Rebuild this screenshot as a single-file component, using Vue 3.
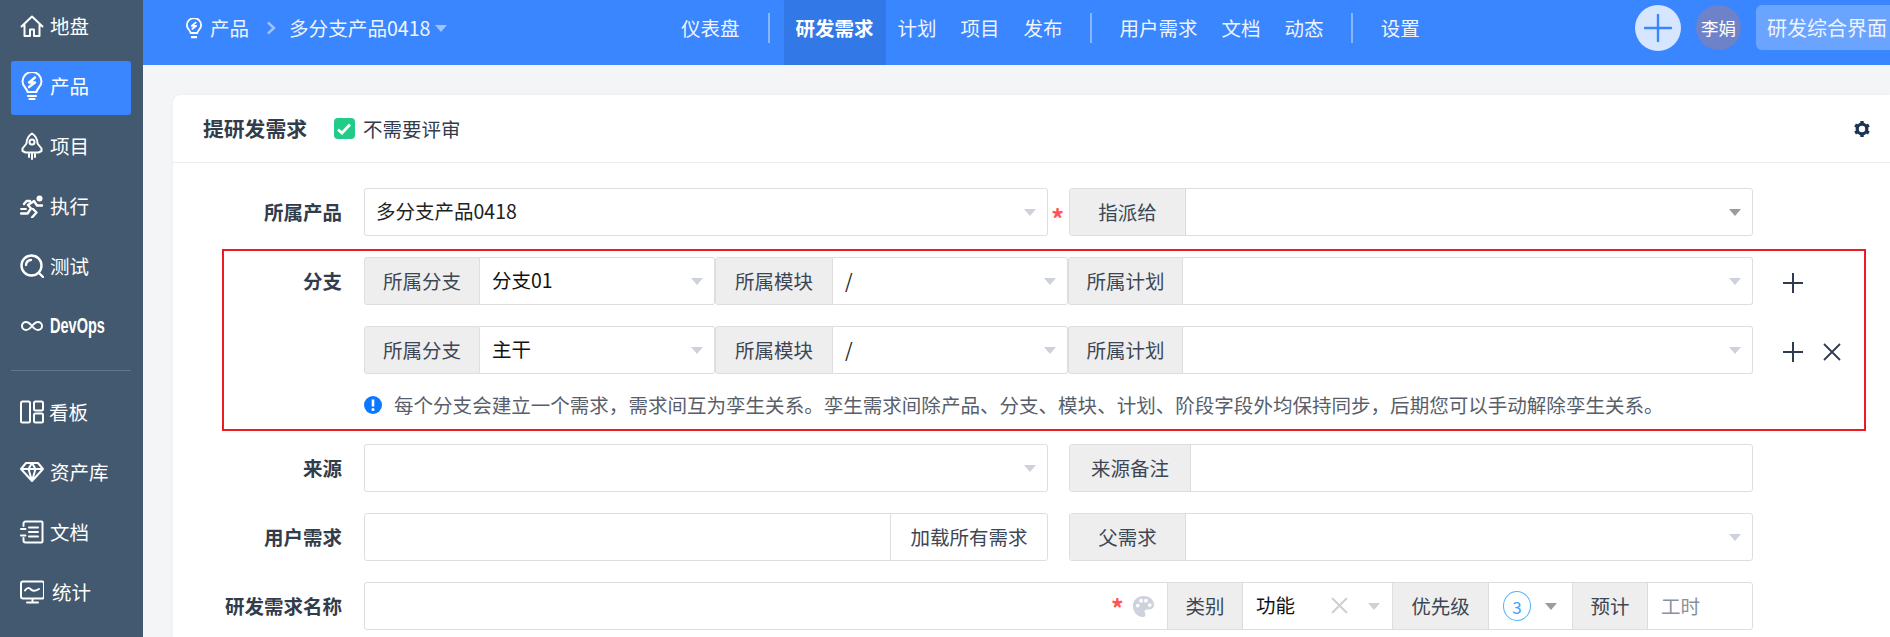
<script setup>
const items = [
  { key: 'home', label: '地盘', view: '0 0 24 24', h: 24 },
  { key: 'product', label: '产品', active: true, view: '0 0 24 28', h: 28 },
  { key: 'project', label: '项目', view: '0 0 24 28', h: 28 },
  { key: 'run', label: '执行', view: '0 0 24 24', h: 24 },
  { key: 'test', label: '测试', view: '0 0 24 24', h: 24 },
  { key: 'devops', label: 'DevOps', narrow: true, view: '0 0 24 24', h: 24 }
]
const items2 = [
  { key: 'board', label: '看板' },
  { key: 'asset', label: '资产库' },
  { key: 'doc', label: '文档' },
  { key: 'stat', label: '统计' }
]
const branches = [
  { name: '分支01', remove: false },
  { name: '主干', remove: true }
]
</script>

<template>
  <div class="page">
    <aside class="side">
      <div v-for="it in items" :key="it.key" class="side-item" :class="{ on: it.active }">
        <svg class="side-ico" :viewBox="it.view" width="24" :height="it.h" fill="none" stroke="#fff" stroke-width="2" stroke-linejoin="round" stroke-linecap="round">
          <template v-if="it.key === 'home'">
            <path d="M1.500 12.500 12 2.500l10.500 10M4.500 10.500V22h5.500v-6.500h4V22h5.500V10.500" />
          </template>
          <template v-else-if="it.key === 'product'">
            <path d="M7.500 20c0-3.500-5-5-5-10.500a9.500 9.500 0 0 1 19 0c0 5.500-5 7-5 10.500z" />
            <path d="M8 24h8M9.500 27h5" stroke-width="2.200" />
            <path d="M15 5.500 9 10.500h6L9 15" stroke-width="2.400" />
          </template>
          <template v-else-if="it.key === 'project'">
            <path d="M12 1.500c4.500 3 5.500 7 5.500 10l4 5v2.500l-3 1.500H5.500l-3-1.500v-2.500l4-5c0-3 1-7 5.500-10z" />
            <circle cx="12" cy="10" r="2.500" />
            <path d="M9 22v3M12 22v5M15 22v3" />
          </template>
          <template v-else-if="it.key === 'run'">
            <circle cx="19.500" cy="4.500" r="3" fill="#fff" stroke="none" />
            <path d="M1 19.500h6.500l3.500-5-3-3.500 6-4 3 4.500h5M10 7H6.500L4 10M13 15l3.500 3.500-4.500 5" stroke-width="2.400" />
            <path d="M1 15h5" stroke-width="1.800" />
          </template>
          <template v-else-if="it.key === 'test'">
            <circle cx="11.500" cy="11.500" r="10" stroke-width="2.400" />
            <path d="M6 11a5.500 5.500 0 0 1 5-5M19 19l4 4" stroke-width="2.400" />
          </template>
          <template v-else-if="it.key === 'devops'">
            <path d="M12 12c-2-2.500-3.500-4-6-4a4 4 0 0 0 0 8c2.500 0 4-1.500 6-4s3.500-4 6-4a4 4 0 0 1 0 8c-2.500 0-4-1.500-6-4z" />
          </template>
        </svg>
        <span :class="{ narrow: it.narrow }">{{ it.label }}</span>
      </div>
      <div class="side-line"></div>
      <div v-for="it in items2" :key="it.key" class="side-item" :class="it.key">
        <svg class="side-ico" viewBox="0 0 24 24" width="24" height="24" fill="none" stroke="#fff" stroke-width="2" stroke-linejoin="round" stroke-linecap="round">
          <template v-if="it.key === 'board'">
            <rect x="1" y="1.500" width="9" height="21" rx="1.500" />
            <rect x="14" y="1.500" width="9" height="9" rx="1.500" />
            <rect x="14" y="13.500" width="9" height="9" rx="1.500" />
          </template>
          <template v-else-if="it.key === 'asset'">
            <path d="M6 3h12l5 6-11 12L1 9zM1 9h22M8.500 9 12 21l3.500-12L12 3 8.500 9z" />
          </template>
          <template v-else-if="it.key === 'doc'">
            <path d="M3.500 6V3.500a2 2 0 0 1 2-2h16a1 1 0 0 1 1 1v19a1 1 0 0 1-1 1h-16a2 2 0 0 1-2-2V18" />
            <path d="M1 9h4.500M1 15.500h4.500M9 7.500h9M9 12h9M9 16.500h9" />
          </template>
          <template v-else>
            <rect x="1" y="1.500" width="23" height="17" rx="2" />
            <path d="M5 10.500c2-3 4-3 6-1s4 2 8-.5M7 22.500h11M12.500 19v3" />
          </template>
        </svg>
        <span>{{ it.label }}</span>
      </div>
    </aside>

    <div class="main">
      <header class="top">
        <div class="crumb">
          <svg class="crumb-ico" viewBox="0 0 24 28" width="18" height="21" fill="none" stroke="#fff" stroke-width="2.400" stroke-linejoin="round">
            <path d="M7.500 20c0-3.500-5-5-5-10.500a9.500 9.500 0 0 1 19 0c0 5.500-5 7-5 10.500z" />
            <path d="M8 25.500h8" stroke-width="3" />
            <path d="M15 5.500 9 10.500h6L9 15" />
          </svg>
          <span>产品</span>
          <svg class="crumb-arrow" viewBox="0 0 10 14" fill="none" stroke="#9fc3ff" stroke-width="2.400"><path d="m2 1.500 6 5.500-6 5.500" /></svg>
          <span class="crumb-name">多分支产品0418</span>
          <i class="crumb-caret"></i>
        </div>
        <nav class="nav">
          <span class="nav-item first">仪表盘</span>
          <i class="nav-sep short"></i>
          <span class="nav-item on">研发需求</span>
          <span class="nav-item">计划</span>
          <span class="nav-item">项目</span>
          <span class="nav-item">发布</span>
          <i class="nav-sep"></i>
          <span class="nav-item">用户需求</span>
          <span class="nav-item">文档</span>
          <span class="nav-item">动态</span>
          <i class="nav-sep"></i>
          <span class="nav-item">设置</span>
        </nav>
        <div class="tools">
          <div class="plus-btn">
            <svg viewBox="0 0 30 30" width="30" height="30" fill="none" stroke="#3a86ff" stroke-width="2.400" stroke-linecap="round"><path d="M15 2v26M2 15h26" /></svg>
          </div>
          <div class="avatar">李娟</div>
          <div class="space">研发综合界面</div>
        </div>
      </header>

      <section class="card">
        <div class="card-head">
          <h1>提研发需求</h1>
          <span class="check">
            <svg viewBox="0 0 16 16" width="16" height="16" fill="none" stroke="#fff" stroke-width="2.800"><path d="m2 8.500 4 3.500 8-8.500" /></svg>
          </span>
          <span class="check-text">不需要评审</span>
          <svg class="gear" viewBox="0 0 16 16" width="16" height="16" fill="none" stroke="#1f3352">
            <circle cx="8" cy="8" r="4.800" stroke-width="3.200" />
            <path d="M8 0v3M8 13v3M1.100 4l2.600 1.500M12.300 10.500l2.600 1.500M1.100 12l2.600-1.500M12.300 5.500 14.900 4" stroke-width="3.400" />
          </svg>
        </div>

        <div class="form">
          <div class="row">
            <label class="label">所属产品</label>
            <div class="half box sel">
              <span class="val">多分支产品0418</span>
              <i class="caret"></i>
            </div>
            <span class="star mid">*</span>
            <div class="half group">
              <span class="addon w116">指派给</span>
              <div class="fill sel"><i class="caret dark"></i></div>
            </div>
          </div>

          <div class="branch">
            <div v-for="b in branches" :key="b.name" class="row branch-row">
              <label class="label branch-label">{{ b.remove ? '' : '分支' }}</label>
              <div class="branch-group">
                <span class="addon w116 alone">所属分支</span>
                <div class="sel piece w235"><span class="val tight">{{ b.name }}</span><i class="caret"></i></div>
                <span class="addon w118 alone">所属模块</span>
                <div class="sel piece w235"><span class="val slash">/</span><i class="caret"></i></div>
                <span class="addon w115 alone">所属计划</span>
                <div class="sel piece grow"><i class="caret"></i></div>
              </div>
              <div class="ops">
                <svg viewBox="0 0 22 22" width="22" height="22" fill="none" stroke="#2f3c50" stroke-width="2"><path d="M11 1v20M1 11h20" /></svg>
                <svg v-if="b.remove" class="op-x" viewBox="0 0 20 20" width="20" height="20" fill="none" stroke="#2f3c50" stroke-width="1.800"><path d="m2 2 16 16M18 2 2 18" /></svg>
              </div>
            </div>
            <div class="note">
              <svg viewBox="0 0 18 18" width="18" height="18"><circle cx="9" cy="9" r="9" fill="#0b78ff" /><path d="M9 3.500v7" stroke="#fff" stroke-width="2.600" /><circle cx="9" cy="13.500" r="1.500" fill="#fff" /></svg>
              <span>每个分支会建立一个需求，需求间互为孪生关系。孪生需求间除产品、分支、模块、计划、阶段字段外均保持同步，后期您可以手动解除孪生关系。</span>
            </div>
          </div>

          <div class="row">
            <label class="label">来源</label>
            <div class="half box sel"><i class="caret"></i></div>
            <div class="half group gap-l">
              <span class="addon w121">来源备注</span>
              <div class="fill"></div>
            </div>
          </div>

          <div class="row">
            <label class="label">用户需求</label>
            <div class="half group">
              <div class="fill"></div>
              <span class="load">加载所有需求</span>
            </div>
            <div class="half group gap-l">
              <span class="addon w116">父需求</span>
              <div class="fill sel"><i class="caret"></i></div>
            </div>
          </div>

          <div class="row">
            <label class="label">研发需求名称</label>
            <div class="title-group">
              <div class="fill title-input">
                <span class="star small">*</span>
                <svg class="palette" viewBox="0 0 24 24" width="23" height="23">
                  <path fill="#cdd2dc" fill-rule="evenodd" d="M12 1C5.500 1 1 5.500 1 11.500S5.500 23 11 23c2 0 3-1 3-2.500s-1-2-1-3.200c0-1.300 1-2.300 2.500-2.300H18c3 0 5-1.800 5-4.500C23 5 18.500 1 12 1zM6 13a2 2 0 1 1 0-4 2 2 0 0 1 0 4zm3.500-5a2 2 0 1 1 0-4 2 2 0 0 1 0 4zm5 0a2 2 0 1 1 0-4 2 2 0 0 1 0 4zm4 4.500a2 2 0 1 1 0-4 2 2 0 0 1 0 4z" />
                </svg>
              </div>
              <span class="addon w76 lb">类别</span>
              <div class="sel type">
                <span class="val tight">功能</span>
                <svg class="clear" viewBox="0 0 17 17" width="17" height="17" fill="none" stroke="#cfcfcf" stroke-width="2"><path d="m1 1 15 15M16 1 1 16" /></svg>
                <i class="caret"></i>
              </div>
              <span class="addon w97 lb">优先级</span>
              <div class="sel prio">
                <span class="pri">3</span>
                <i class="caret dark"></i>
              </div>
              <span class="addon w76 lb">预计</span>
              <div class="hours">工时</div>
            </div>
          </div>
        </div>
      </section>
    </div>
  </div>
</template>

<style scoped>
.page {
  display: flex;
  width: 1890px;
  height: 637px;
  overflow: hidden;
  background: #f3f5f7;
  font-family: "Noto Sans CJK SC", "Noto Sans", sans-serif;
  font-size: 19.5px;
  color: #333c4a;
  line-height: 1;
}

/* sidebar */
.side {
  flex: 0 0 143px;
  min-width: 0;
  background: #43596f;
  padding: 1px 12px 0 11px;
  box-sizing: border-box;
}
.side-item {
  display: flex;
  align-items: center;
  gap: 6px;
  height: 54px;
  margin-bottom: 6px;
  padding: 0 0 4px 9px;
  box-sizing: border-box;
  color: #fff;
  font-size: 19.5px;
  border-radius: 3px;
}
.side-item.on { background: #3a86ff; }
.side-item.board { gap: 5px; }
.side-item.stat { gap: 8px; }
.side-ico { flex: 0 0 24px; }
.narrow {
  display: inline-block;
  width: 54px;
  font-family: "Liberation Sans", sans-serif;
  font-weight: 700;
  font-size: 22px;
  transform: scaleX(0.66);
  transform-origin: left center;
  white-space: nowrap;
}
.side-line {
  height: 1px;
  background: #64768a;
  margin: 15px 0 16px;
}

/* top bar */
.main { flex: 1; min-width: 0; display: flex; flex-direction: column; }
.top {
  flex: 0 0 65px;
  display: flex;
  align-items: center;
  background: #3a86ff;
  color: #eef4ff;
  padding-left: 42px;
}
.crumb { flex: 0 0 496px; display: flex; align-items: center; font-size: 19.5px; padding-bottom: 9px; box-sizing: border-box; }
.crumb-ico { margin-right: 7px; }
.crumb-arrow { width: 10px; height: 14px; margin: 0 13px 0 17px; }
.crumb-name { font-size: 19.6px; }
.crumb-caret {
  margin-left: 5px;
  border: 6px solid transparent;
  border-top: 7px solid #9fc3ff;
  border-bottom: 0;
}
.nav { display: flex; align-items: center; height: 65px; }
.nav-item {
  display: flex;
  align-items: center;
  height: 65px;
  padding: 0 12px 10px;
  box-sizing: border-box;
  white-space: nowrap;
  font-size: 19.5px;
}
.nav-item.first { padding-left: 0; padding-right: 13px; }
.nav-item.on { background: #3278e6; color: #fff; font-weight: 700; }
.nav-sep {
  flex: 0 0 2px;
  height: 30px;
  margin: 0 16px 9px 15px;
  background: #8ab6ff;
}
.nav-sep.short { margin-right: 14px; }
.tools {
  margin-left: auto;
  display: flex;
  align-items: center;
  gap: 15px;
  flex: 0 0 255px;
  padding-bottom: 10px;
  overflow: hidden;
}
.plus-btn {
  flex: 0 0 46px;
  height: 46px;
  border-radius: 50%;
  background: #d6e6ff;
  display: flex;
  align-items: center;
  justify-content: center;
}
.avatar {
  flex: 0 0 45px;
  height: 45px;
  border-radius: 50%;
  background: #6d82c8;
  color: #fff;
  font-size: 17.5px;
  display: flex;
  align-items: center;
  justify-content: center;
  white-space: nowrap;
}
.space {
  flex: 0 0 160px;
  height: 45px;
  border-radius: 6px 0 0 6px;
  background: #6ba4ff;
  padding-left: 11px;
  display: flex;
  align-items: center;
  white-space: nowrap;
  font-size: 20px;
}

/* card */
.card {
  margin: 30px 0 0 30px;
  flex: 1;
  background: #fff;
  border-radius: 8px 0 0 0;
  box-shadow: 0 0 4px rgba(0, 0, 0, .04);
}
.card-head {
  display: flex;
  align-items: center;
  height: 67px;
  padding-left: 30px;
  border-bottom: 1px solid #ececec;
}
.card-head h1 {
  margin: 0;
  font-size: 20.8px;
  font-weight: 700;
  color: #333c4a;
}
.check {
  margin-left: 27px;
  width: 21px;
  height: 21px;
  border-radius: 4px;
  background: #22cc88;
  display: flex;
  align-items: center;
  justify-content: center;
}
.check-text { margin-left: 8px; font-size: 19.5px; }
.gear { margin-left: auto; margin-right: 20px; }

/* form */
.form { display: flex; flex-direction: column; padding-top: 25px; }
.row { display: flex; align-items: stretch; height: 48px; margin-bottom: 21px; }
.label {
  flex: 0 0 169px;
  display: flex;
  align-items: center;
  justify-content: flex-end;
  margin-right: 22px;
  font-weight: 700;
  color: #333c4a;
}
.half { flex: 0 0 684px; box-sizing: border-box; }
.box, .group, .title-group, .branch-group { border-radius: 3px; }
.box { border: 1.5px solid #dedede; }
.group { display: flex; border: 1.5px solid #dedede; }
.star { color: #f55; font-weight: 700; }
.star.mid {
  flex: 0 0 21px;
  display: flex;
  align-items: center;
  justify-content: center;
  padding: 12px 2px 0 0;
  font-size: 26px;
  box-sizing: border-box;
}
.sel { position: relative; display: flex; align-items: center; }
.val { padding: 0 0 2px 11px; color: #222; font-size: 19.5px; white-space: nowrap; }
.val.tight { padding-left: 12px; color: #111; }
.val.slash { padding-left: 12px; }
.caret {
  position: absolute;
  right: 11px;
  top: 50%;
  margin-top: -3px;
  border: 6px solid transparent;
  border-top: 7px solid #cdd1da;
  border-bottom: 0;
}
.caret.dark { border-top-color: #9a9ca2; }
.fill { flex: 1; min-width: 0; }
.addon {
  display: flex;
  align-items: center;
  justify-content: center;
  background: #eee;
  color: #3d4654;
  border-right: 1px solid #dcdcdc;
  box-sizing: border-box;
  white-space: nowrap;
}
.addon.alone { border: 1.5px solid #dedede; border-radius: 3px 0 0 3px; }
.w116 { flex: 0 0 116px; }
.w115 { flex: 0 0 115px; }
.w118 { flex: 0 0 118px; }
.w121 { flex: 0 0 121px; }
.w76 { flex: 0 0 76px; }
.w97 { flex: 0 0 97px; }
.gap-l { margin-left: 21px; }
.load {
  flex: 0 0 157px;
  box-sizing: border-box;
  display: flex;
  align-items: center;
  justify-content: center;
  border-left: 1px solid #dedede;
  color: #3d4654;
  white-space: nowrap;
}

/* branch block */
.branch {
  margin: -8px 0 13px 49px;
  height: 182px;
  width: 1644px;
  box-sizing: border-box;
  border: 2px solid #ed1c24;
  padding-top: 6px;
}
.branch-label { flex-basis: 118px; }
.branch-group { display: flex; flex: 0 0 1389px; }
.piece { box-sizing: border-box; border: 1.5px solid #dedede; border-left: 0; border-radius: 0 3px 3px 0; }
.w235 { flex: 0 0 235px; }
.grow { flex: 1; }
.ops { position: relative; margin-left: 29px; display: flex; align-items: center; padding-top: 3px; }
.op-x { position: absolute; left: 40px; top: 16px; }
.note {
  display: flex;
  align-items: center;
  gap: 12px;
  margin: 5px 0 0 140px;
  color: #585f6b;
  font-size: 19.54px;
  white-space: nowrap;
}

/* title row */
.title-group { display: flex; flex: 0 0 1389px; border: 1.5px solid #dedede; box-sizing: border-box; }
.title-input { position: relative; }
.star.small { position: absolute; left: 746px; top: 12px; font-size: 25px; }
.palette { position: absolute; left: 767px; top: 12px; }
.lb { border-left: 1px solid #dedede; }
.type { flex: 0 0 149px; position: relative; }
.type .val.tight { padding-left: 13px; }
.clear { position: absolute; left: 88px; top: 14px; }
.type .caret { right: 12px; }
.prio { flex: 0 0 83px; }
.prio .caret { right: 15px; }
.pri {
  margin-left: 14px;
  width: 28px;
  height: 30px;
  box-sizing: border-box;
  border: 1.5px solid #4fb1ff;
  border-radius: 50%;
  color: #3ba4ff;
  font-size: 17px;
  display: flex;
  align-items: center;
  justify-content: center;
}
.hours {
  flex: 0 0 104px;
  display: flex;
  align-items: center;
  padding-left: 13px;
  box-sizing: border-box;
  color: #8a90a0;
}
</style>
